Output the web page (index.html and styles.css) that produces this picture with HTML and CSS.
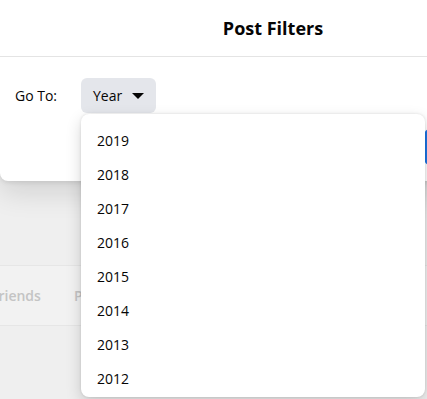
FILE: index.html
```html
<!DOCTYPE html>
<html>
<head>
    <meta charset='utf-8'>
    <title>Post Filters</title>
    <meta name='viewport' content='width=device-width, initial-scale=1'>
    <link rel="stylesheet" href="styles.css">
</head>
<body>
    <div class="page">
        <div class="page-top"></div>
        <nav class="tabs">
            <span class="tab tab-first">Friends</span>
            <span class="tab">Photos</span>
        </nav>
    </div>

    <div class="modal">
        <header class="modal-head">
            <h2>Post Filters</h2>
        </header>
        <div class="modal-body">
            <div class="row">
                <label class="row-label">Go To:</label>
                <button class="select" type="button">
                    <span>Year</span>
                    <span class="caret"></span>
                </button>
            </div>
            <div class="row row-end">
                <button class="btn-primary" type="button">Done</button>
            </div>
        </div>
    </div>

    <ul class="menu">
        <li>2019</li>
        <li>2018</li>
        <li>2017</li>
        <li>2016</li>
        <li>2015</li>
        <li>2014</li>
        <li>2013</li>
        <li>2012</li>
    </ul>
</body>
</html>
```

FILE: styles.css
```css
html, body {
    margin: 0;
    padding: 0;
}
body {
    width: 427px;
    height: 399px;
    overflow: hidden;
    position: relative;
    background: #efefef;
    font-family: "Open Sans", "Noto Sans", sans-serif;
    color: #050505;
}

/* dimmed page behind */
.page-top {
    height: 265px;
}
.tabs {
    display: flex;
    gap: 33px;
    height: 59px;
    align-items: center;
    border-top: 1px solid #e6e6e6;
    border-bottom: 1px solid #e6e6e6;
    background: #f2f2f2;
}
.tab {
    font-size: 14px;
    font-weight: 600;
    color: #c4c4c4;
}
.tab-first {
    margin-left: -9px;
}

/* modal */
.modal {
    position: absolute;
    left: 0;
    top: -10px;
    width: 546px;
    height: 191px;
    background: #fff;
    border-radius: 8px;
    box-shadow: 0 12px 28px rgba(0,0,0,0.12), 0 2px 4px rgba(0,0,0,0.08);
}
.modal-head {
    height: 67px;
    box-sizing: border-box;
    padding-top: 9px;
    border-bottom: 1px solid #e4e4e4;
    display: flex;
    align-items: center;
    justify-content: center;
}
.modal-head h2 {
    margin: 0;
    font-size: 18px;
    font-weight: 700;
}
.modal-body {
    padding: 21px 16px 0 15px;
}
.row {
    display: flex;
    align-items: center;
}
.row-label {
    width: 66px;
    font-size: 14px;
}
.select {
    display: flex;
    align-items: center;
    gap: 10px;
    height: 35px;
    padding: 0 12px;
    border: 0;
    border-radius: 6px;
    background: #e4e6eb;
    font-family: inherit;
    font-size: 14px;
    color: #050505;
}
.caret {
    width: 0;
    height: 0;
    border-left: 6px solid transparent;
    border-right: 6px solid transparent;
    border-top: 6px solid #050505;
}
.row-end {
    justify-content: flex-end;
    margin-top: 16px;
}
.btn-primary {
    height: 36px;
    width: 106px;
    border: 0;
    border-radius: 6px;
    background: #1b74e4;
    color: #fff;
    font-family: inherit;
    font-size: 14px;
    font-weight: 600;
}

/* year dropdown */
.menu {
    position: absolute;
    left: 81px;
    top: 114px;
    width: 344px;
    height: 283px;
    margin: 0;
    padding: 10px 0 0;
    list-style: none;
    box-sizing: border-box;
    overflow: hidden;
    background: #fff;
    border-radius: 8px;
    box-shadow: 0 6px 16px rgba(0,0,0,0.16), 0 0 3px rgba(0,0,0,0.12);
}
.menu li {
    height: 34px;
    line-height: 34px;
    padding-left: 16px;
    font-size: 14px;
}
```
